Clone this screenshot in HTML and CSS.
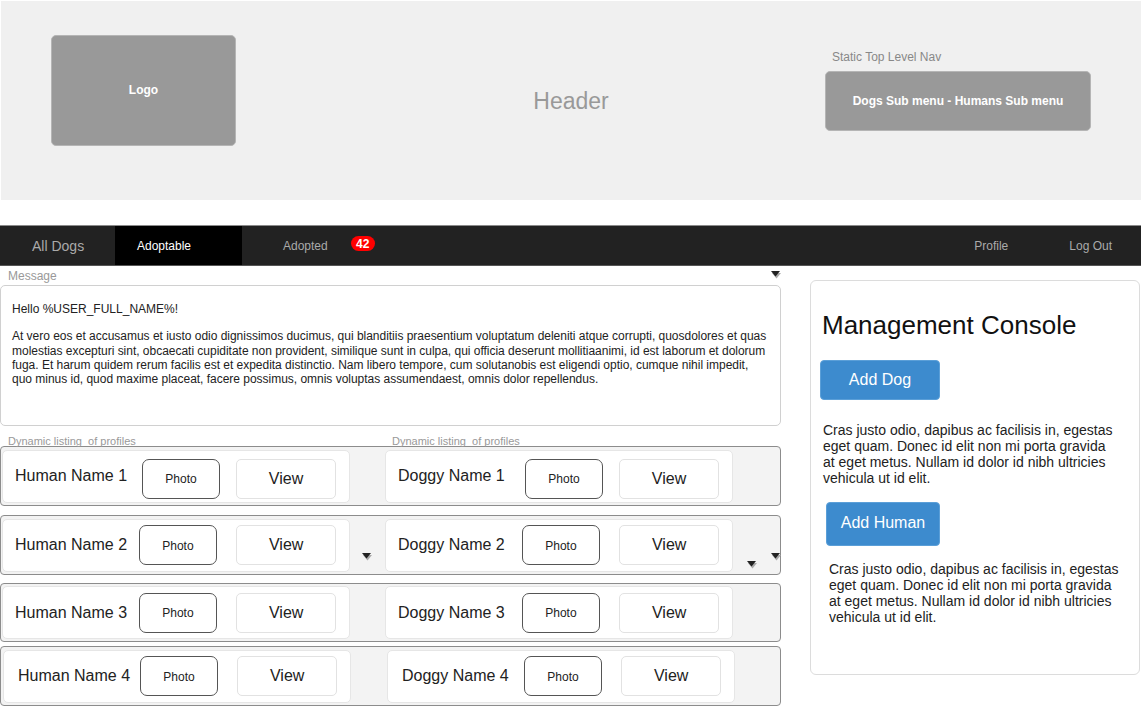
FILE: index.html
```html
<!DOCTYPE html>
<html lang="en">
<head>
<meta charset="utf-8">
<title>Dogs Wireframe</title>
<link rel="stylesheet" href="styles.css">
</head>
<body>
<header class="site-header">
  <div class="logo">Logo</div>
  <div class="header-title">Header</div>
  <div class="top-nav">
    <div class="top-nav-label">Static Top Level Nav</div>
    <div class="top-nav-box">Dogs Sub menu - Humans Sub menu</div>
  </div>
</header>

<nav class="tabs">
  <div class="tab tab-all">All Dogs</div>
  <div class="tab tab-active">Adoptable</div>
  <div class="tab tab-adopted">Adopted <span class="badge">42</span></div>
  <div class="tabs-spacer"></div>
  <div class="tab tab-profile">Profile</div>
  <div class="tab tab-logout">Log Out</div>
</nav>

<main class="main">
  <section class="left-col">
    <div class="msg-head">
      <span class="label">Message</span>
      <svg class="caret" width="10" height="8" viewBox="0 0 10 8"><polygon points="1,2 10,2 5.5,7.5" fill="#aaa"/><polygon points="0,0 9,0 4.5,5.5" fill="#222"/></svg>
    </div>
    <div class="msg-box">
      <p class="msg-hello">Hello %USER_FULL_NAME%!</p>
      <p class="msg-text">At vero eos et accusamus et iusto odio dignissimos ducimus, qui blanditiis praesentium voluptatum deleniti atque corrupti, quosdolores et quas<br>molestias excepturi sint, obcaecati cupiditate non provident, similique sunt in culpa, qui officia deserunt mollitiaanimi, id est laborum et dolorum<br>fuga. Et harum quidem rerum facilis est et expedita distinctio. Nam libero tempore, cum solutanobis est eligendi optio, cumque nihil impedit,<br>quo minus id, quod maxime placeat, facere possimus, omnis voluptas assumendaest, omnis dolor repellendus.</p>
    </div>
    <div class="listing-head">
      <span class="listing-label first">Dynamic listing  of profiles</span>
      <span class="listing-label">Dynamic listing  of profiles</span>
    </div>

    <div class="row row-1">
      <div class="card"><span class="name">Human Name 1</span><span class="photo photo-wide">Photo</span><span class="view">View</span></div>
      <div class="gutter"></div>
      <div class="card"><span class="name">Doggy Name 1</span><span class="photo photo-wide">Photo</span><span class="view">View</span></div>
      <div class="trail"></div>
    </div>

    <div class="row row-2">
      <div class="card"><span class="name">Human Name 2</span><span class="photo">Photo</span><span class="view">View</span></div>
      <div class="gutter">
        <svg class="caret caret-mid" width="10" height="8" viewBox="0 0 10 8"><polygon points="1,2 10,2 5.5,7.5" fill="#aaa"/><polygon points="0,0 9,0 4.5,5.5" fill="#222"/></svg>
      </div>
      <div class="card"><span class="name">Doggy Name 2</span><span class="photo">Photo</span><span class="view">View</span></div>
      <div class="trail">
        <svg class="caret caret-low" width="10" height="8" viewBox="0 0 10 8"><polygon points="1,2 10,2 5.5,7.5" fill="#aaa"/><polygon points="0,0 9,0 4.5,5.5" fill="#222"/></svg>
        <svg class="caret caret-edge" width="10" height="8" viewBox="0 0 10 8"><polygon points="1,2 10,2 5.5,7.5" fill="#aaa"/><polygon points="0,0 9,0 4.5,5.5" fill="#222"/></svg>
      </div>
    </div>

    <div class="row row-3">
      <div class="card"><span class="name">Human Name 3</span><span class="photo">Photo</span><span class="view">View</span></div>
      <div class="gutter"></div>
      <div class="card"><span class="name">Doggy Name 3</span><span class="photo">Photo</span><span class="view">View</span></div>
      <div class="trail"></div>
    </div>

    <div class="row row-4">
      <div class="card card-shift"><span class="name">Human Name 4</span><span class="photo">Photo</span><span class="view">View</span></div>
      <div class="gutter"></div>
      <div class="card card-shift"><span class="name">Doggy Name 4</span><span class="photo">Photo</span><span class="view">View</span></div>
      <div class="trail"></div>
    </div>
  </section>

  <aside class="console">
    <h2 class="console-title">Management Console</h2>
    <div class="btn btn-dog">Add Dog</div>
    <p class="console-text">Cras justo odio, dapibus ac facilisis in, egestas<br>eget quam. Donec id elit non mi porta gravida<br>at eget metus. Nullam id dolor id nibh ultricies<br>vehicula ut id elit.</p>
    <div class="btn btn-human">Add Human</div>
    <p class="console-text text-human">Cras justo odio, dapibus ac facilisis in, egestas<br>eget quam. Donec id elit non mi porta gravida<br>at eget metus. Nullam id dolor id nibh ultricies<br>vehicula ut id elit.</p>
  </aside>
</main>
</body>
</html>
```

FILE: styles.css
```css
* { box-sizing: border-box; }

html, body {
  margin: 0;
  padding: 0;
  background: #fff;
  overflow: hidden;
}

body {
  font-family: "Liberation Sans", Arial, sans-serif;
  color: #222;
  width: 1142px;
  height: 707px;
}

/* ---------- Header ---------- */
.site-header {
  display: grid;
  grid-template-columns: 1fr auto 1fr;
  align-items: start;
  height: 199px;
  margin: 1px 1px 0 1px;
  padding: 0 50px;
  background: #f0f0f0;
}

.logo {
  justify-self: start;
  margin-top: 34px;
  width: 185px;
  height: 111px;
  background: #999;
  border: 1px solid #b5b5b5;
  border-radius: 5px;
  color: #fff;
  font-weight: bold;
  font-size: 12px;
  display: flex;
  align-items: center;
  justify-content: center;
  padding-bottom: 2px;
}

.header-title {
  align-self: center;
  font-size: 23px;
  color: #999;
  padding-top: 2px;
}

.top-nav {
  justify-self: end;
  width: 266px;
  margin-top: 49px;
}

.top-nav-label {
  font-size: 12px;
  color: #888;
  line-height: 14px;
  padding-left: 7px;
}

.top-nav-box {
  margin-top: 7px;
  height: 60px;
  background: #999;
  border: 1px solid #b5b5b5;
  border-radius: 5px;
  color: #fff;
  font-weight: bold;
  font-size: 12px;
  display: flex;
  align-items: center;
  justify-content: center;
}

/* ---------- Tabs bar ---------- */
.tabs {
  display: flex;
  align-items: stretch;
  margin-top: 25px;
  height: 41px;
  width: 1141px;
  background: #222;
  border-top: 1px solid #8a8a8a;
  border-bottom: 1px solid #555;
}

.tab {
  display: flex;
  align-items: center;
  font-size: 12px;
  color: #aaa;
}

.tab-all {
  width: 115px;
  padding-left: 32px;
  font-size: 14px;
  padding-top: 1px;
}

.tab-active {
  width: 127px;
  padding-left: 22px;
  background: #000;
  color: #fff;
}

.tab-adopted {
  padding-left: 41px;
}

.badge {
  display: inline-flex;
  align-items: center;
  justify-content: center;
  width: 24px;
  height: 15px;
  margin-left: 23px;
  margin-top: -4px;
  border-radius: 8px;
  background: #f00;
  color: #fff;
  font-weight: bold;
  font-size: 12px;
}

.tabs-spacer { flex: 1; }

.tab-profile { padding-right: 61px; }
.tab-logout { padding-right: 29px; }

/* ---------- Main ---------- */
.main {
  display: flex;
  align-items: flex-start;
}

.left-col {
  width: 781px;
  flex: none;
}

.msg-head {
  height: 19px;
  display: flex;
  align-items: center;
  justify-content: space-between;
  padding-left: 8px;
}

.label {
  font-size: 12px;
  color: #999;
}

.caret { display: block; flex: none; }

.msg-head .caret { margin-top: -2px; }

.msg-box {
  height: 141px;
  border: 1px solid #d0d0d0;
  border-radius: 5px;
  padding: 16px 11px 0;
  font-size: 12px;
  line-height: 14.3px;
  color: #222;
}

.msg-box p { margin: 0; white-space: nowrap; }
.msg-box .msg-text { margin-top: 13px; letter-spacing: -0.02px; }

.listing-head {
  height: 20px;
  display: flex;
  align-items: flex-start;
  padding-top: 9px;
  font-size: 11px;
  color: #999;
  line-height: 13px;
  white-space: pre;
}

.listing-label.first {
  width: 392px;
  padding-left: 8px;
}

/* Rows */
.row {
  display: flex;
  align-items: center;
  height: 60px;
  border: 1px solid #8c8c8c;
  border-radius: 4px;
  background: #f3f3f3;
}

.row-2 { margin-top: 9px; }
.row-3 { margin-top: 8px; height: 59px; }
.row-4 { margin-top: 4px; }

.card {
  display: flex;
  align-items: center;
  width: 348px;
  height: 53px;
  margin-left: 1px;
  padding: 0 13px 0 12px;
  background: #fff;
  border: 1px solid #e6e6e6;
  border-radius: 5px;
}

.card-shift { margin-left: 2px; }

.gutter {
  flex: none;
  width: 34px;
  height: 100%;
  display: flex;
  align-items: flex-end;
  padding-left: 12px;
  padding-bottom: 13px;
}

.name {
  width: 124px;
  font-size: 16px;
  color: #222;
}

.row-4 .card .name { padding-left: 2px; }

.photo {
  width: 79px;
  height: 40px;
  border: 1px solid #555;
  border-radius: 7px;
  display: flex;
  align-items: center;
  justify-content: center;
  font-size: 12px;
  color: #222;
  padding-top: 1px;
}

.photo-wide { margin-left: 3px; width: 78px; }

.view {
  width: 100px;
  height: 40px;
  margin-left: 19px;
  border: 1px solid #e2e2e2;
  border-radius: 5px;
  display: flex;
  align-items: center;
  justify-content: center;
  font-size: 16px;
  color: #222;
}

.photo-wide + .view { margin-left: 16px; }

.row-1 .photo,
.row-1 .view { margin-top: 5px; }

.trail {
  flex: 1;
  height: 100%;
  display: flex;
  align-items: flex-end;
  padding-left: 14px;
}

.caret-low { margin-bottom: 5px; }
.caret-edge { margin-left: 14px; margin-bottom: 13px; }

/* ---------- Console ---------- */
.console {
  flex: none;
  width: 330px;
  height: 395px;
  margin-left: 29px;
  margin-top: 14px;
  border: 1px solid #dcdcdc;
  border-radius: 6px;
  background: #fff;
  padding: 0 10px;
}

.console-title {
  margin: 29px 0 0 1px;
  font-size: 26px;
  font-weight: normal;
  line-height: 30px;
  color: #111;
}

.btn {
  display: flex;
  align-items: center;
  justify-content: center;
  background: #3d8bce;
  border: 1px solid #5b9fd8;
  border-radius: 4px;
  color: #fff;
  font-size: 16px;
}

.btn-dog {
  width: 120px;
  height: 40px;
  margin-top: 20px;
  margin-left: -1px;
}

.btn-human {
  width: 114px;
  height: 44px;
  margin-top: 16px;
  margin-left: 5px;
  padding-bottom: 3px;
}

.console-text {
  margin: 22px 0 0 2px;
  font-size: 14px;
  line-height: 16px;
  color: #222;
  white-space: nowrap;
}

.console-text.text-human {
  margin-top: 15px;
  margin-left: 8px;
}
```
